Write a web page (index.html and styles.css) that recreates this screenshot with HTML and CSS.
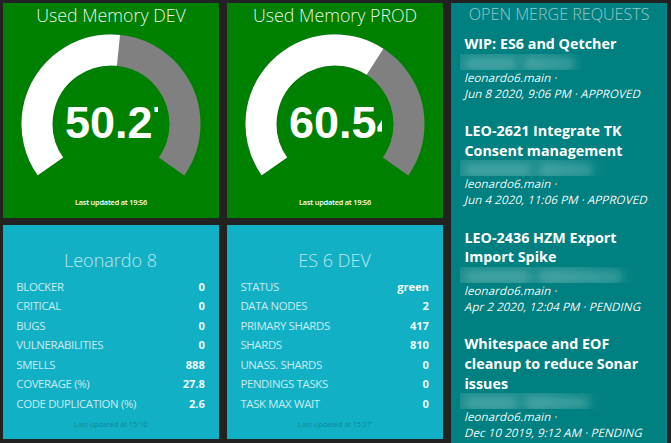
FILE: index.html
```html
<!DOCTYPE html>
<html lang="en">
<head>
<meta charset="utf-8">
<title>Dashboard</title>
<link rel="stylesheet" href="styles.css">
</head>
<body>
<main class="board">
  <section class="tile meter">
    <h1 class="meter-title">Used Memory DEV</h1>
    <div class="gauge">
      <svg class="dial" viewBox="0 0 180 144">
        <g transform="rotate(145 90 90)">
          <circle class="track" cx="90" cy="90" r="74" pathLength="360" stroke-dasharray="250 110"/>
          <circle class="fill" cx="90" cy="90" r="74" pathLength="360" stroke-dasharray="130.8 229.2"/>
        </g>
      </svg>
      <div class="reading">50.27</div>
    </div>
    <p class="updated">Last updated at 19:56</p>
  </section>
  <section class="tile meter">
    <h1 class="meter-title">Used Memory PROD</h1>
    <div class="gauge">
      <svg class="dial" viewBox="0 0 180 144">
        <g transform="rotate(145 90 90)">
          <circle class="track" cx="90" cy="90" r="74" pathLength="360" stroke-dasharray="250 110"/>
          <circle class="fill" cx="90" cy="90" r="74" pathLength="360" stroke-dasharray="157.7 202.3"/>
        </g>
      </svg>
      <div class="reading">60.54</div>
    </div>
    <p class="updated">Last updated at 19:56</p>
  </section>
  <section class="tile requests">
    <h1 class="requests-title">OPEN MERGE REQUESTS</h1>
    <article class="request">
      <h2>WIP: ES6 and Qetcher</h2>
      <div class="people people-a"><i></i><i></i></div>
      <p>leonardo6.main ·</p>
      <p>Jun 8 2020, 9:06 PM · APPROVED</p>
    </article>
    <article class="request">
      <h2>LEO-2621 Integrate TK<br>Consent management</h2>
      <div class="people people-b"><i></i><i></i></div>
      <p>leonardo6.main ·</p>
      <p>Jun 4 2020, 11:06 PM · APPROVED</p>
    </article>
    <article class="request">
      <h2>LEO-2436 HZM Export<br>Import Spike</h2>
      <div class="people people-c"><i></i><i></i></div>
      <p>leonardo6.main ·</p>
      <p>Apr 2 2020, 12:04 PM · PENDING</p>
    </article>
    <article class="request">
      <h2>Whitespace and EOF<br>cleanup to reduce Sonar<br>issues</h2>
      <div class="people people-d"><i></i><i></i></div>
      <p>leonardo6.main ·</p>
      <p>Dec 10 2019, 9:12 AM · PENDING</p>
    </article>
  </section>
  <section class="tile stats">
    <h1 class="stats-title">Leonardo 8</h1>
    <ul>
      <li><span>BLOCKER</span><b>0</b></li>
      <li><span>CRITICAL</span><b>0</b></li>
      <li><span>BUGS</span><b>0</b></li>
      <li><span>VULNERABILITIES</span><b>0</b></li>
      <li><span>SMELLS</span><b>888</b></li>
      <li><span>COVERAGE (%)</span><b>27.8</b></li>
      <li><span>CODE DUPLICATION (%)</span><b>2.6</b></li>
    </ul>
    <p class="updated">Last updated at 15:10</p>
  </section>
  <section class="tile stats">
    <h1 class="stats-title">ES 6 DEV</h1>
    <ul>
      <li><span>STATUS</span><b>green</b></li>
      <li><span>DATA NODES</span><b>2</b></li>
      <li><span>PRIMARY SHARDS</span><b>417</b></li>
      <li><span>SHARDS</span><b>810</b></li>
      <li><span>UNASS. SHARDS</span><b>0</b></li>
      <li><span>PENDINGS TASKS</span><b>0</b></li>
      <li><span>TASK MAX WAIT</span><b>0</b></li>
    </ul>
    <p class="updated">Last updated at 15:27</p>
  </section>
</main>
</body>
</html>
```
FILE: styles.css
```css
* { box-sizing: border-box; margin: 0; padding: 0; }

body {
  width: 671px;
  height: 443px;
  overflow: hidden;
  background: #222;
  color: #fff;
  font-family: "Open Sans", sans-serif;
}

.board {
  display: grid;
  grid-template-columns: repeat(3, 215.4px);
  grid-template-rows: 215.4px 214px;
  column-gap: 8.7px;
  row-gap: 7.3px;
  padding: 2.5px 0 0 3.3px;
}

.tile { overflow: hidden; }
h1 { font-weight: 300; text-align: center; white-space: nowrap; }

.meter { background: #008000; }
.meter-title {
  font-size: 17.8px;
  line-height: 24px;
  color: rgba(255, 255, 255, .95);
}
.gauge {
  display: grid;
  width: 180px;
  height: 144px;
  margin: 7px auto 0;
}
.dial, .reading { grid-area: 1 / 1; }
.dial { width: 180px; height: 144px; }
.track, .fill { fill: none; stroke-width: 31; }
.track { stroke: #808080; }
.fill { stroke: #fff; }
.reading {
  width: 93px;
  margin: 63px 0 0 44px;
  height: 52px;
  overflow: hidden;
  font: bold 45px/52px "Liberation Sans", Arial, sans-serif;
}
.updated { text-align: center; font-size: 7.6px; line-height: 12px; white-space: nowrap; letter-spacing: -.15px; }
.meter .updated { margin-top: 18px; font-weight: 600; font-size: 7.4px; letter-spacing: -.22px; }

.stats { background: #12b0c5; padding: 0 14px 0 13px; }
.stats-title {
  padding-top: 22px;
  font-size: 18px;
  line-height: 26px;
  color: rgba(255, 255, 255, .72);
}
.stats ul { list-style: none; margin-top: 3.5px; }
.stats li {
  display: flex;
  justify-content: space-between;
  font-size: 11.4px;
  line-height: 19.55px;
  color: rgba(255, 255, 255, .78);
}
.stats span { letter-spacing: -.34px; }
.stats b { color: rgba(255, 255, 255, .94); font-weight: 700; font-size: 11.2px; letter-spacing: -.1px; }
.stats .updated { margin-top: 4px; color: rgba(0, 0, 0, .28); }

.requests { grid-row: 1 / 3; grid-column: 3; height: 441px; background: #008080; padding-left: 13px; }
.requests-title {
  margin-left: -13px;
  font-size: 16.1px;
  line-height: 22px;
  color: rgba(255, 255, 255, .6);
}
.request { margin-bottom: 19.5px; white-space: nowrap; }
.requests-title + .request { margin-top: 9.5px; }
.request h2 { font-size: 14.3px; line-height: 19.6px; font-weight: 700; letter-spacing: .02px; }
/* Slanted upright face rather than the true italic */
.request p {
  font-size: 11.6px;
  letter-spacing: .06px;
  line-height: 16px;
  transform: skewX(-14deg);
  transform-origin: 0 12px;
  color: rgba(255, 255, 255, .97);
}

.people {
  display: flex;
  align-items: center;
  gap: 8px;
  height: 16px;
  margin-left: -4px;
  padding: 4px 8px 0 5px;
  overflow: hidden;
  background: linear-gradient(to right, rgba(255, 255, 255, .11) 60%, rgba(255, 255, 255, .01));
}
.people i { height: 12px; border-radius: 5px; background: rgba(255, 255, 255, .19); filter: blur(4.5px); }
.people-a { width: 123px; }
.people-a i { width: 52px; }
.people-b { width: 145px; }
.people-b i { width: 66px; }
.people-b i + i { width: 54px; }
.people-c { width: 173px; }
.people-c i { width: 65px; }
.people-c i + i { width: 84px; }
.people-d { width: 140px; }
.people-d i { width: 52px; }
.people-d i + i { width: 64px; }
```
